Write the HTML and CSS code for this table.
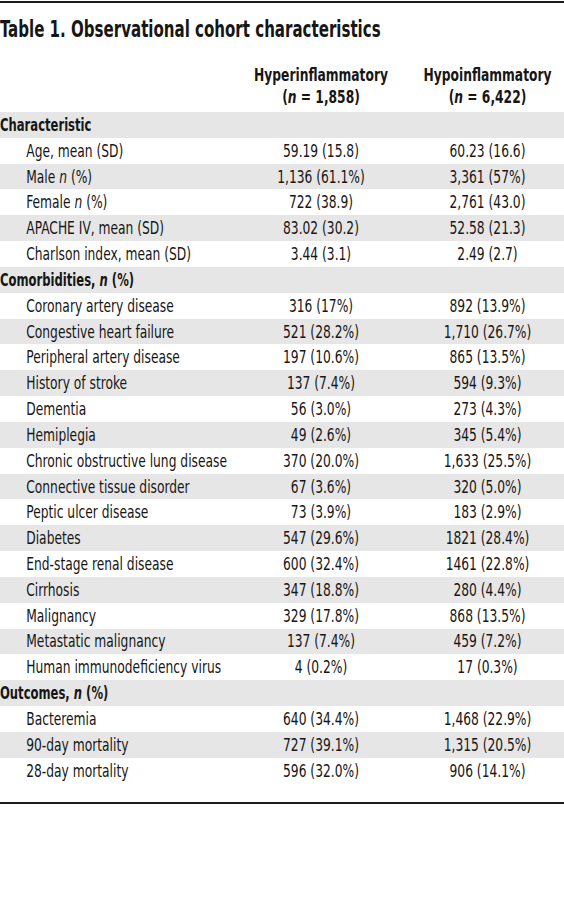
FILE: index.html
```html
<!DOCTYPE html>
<html lang="en">
<head>
  <meta charset="UTF-8">
  <title>Table 1</title>
  <link rel="stylesheet" href="styles.css">
</head>
<body>
  <div class="table-wrap">
    <div class="sheet">
      <h1 class="table-title">Table 1. Observational cohort characteristics</h1>

      <table class="cohort">
        <colgroup>
          <col class="col-label">
          <col class="col-hyper">
          <col class="col-hypo">
        </colgroup>
        <thead>
          <tr>
            <th></th>
            <th>Hyperinflammatory<br>(<i>n</i> = 1,858)</th>
            <th>Hypoinflammatory<br>(<i>n</i> = 6,422)</th>
          </tr>
        </thead>
        <tbody>
          <!-- Characteristic -->
          <tr class="section"><td>Characteristic</td><td></td><td></td></tr>
          <tr><td>Age, mean (SD)</td><td>59.19 (15.8)</td><td>60.23 (16.6)</td></tr>
          <tr><td>Male <i>n</i> (%)</td><td>1,136 (61.1%)</td><td>3,361 (57%)</td></tr>
          <tr><td>Female <i>n</i> (%)</td><td>722 (38.9)</td><td>2,761 (43.0)</td></tr>
          <tr><td>APACHE IV, mean (SD)</td><td>83.02 (30.2)</td><td>52.58 (21.3)</td></tr>
          <tr><td>Charlson index, mean (SD)</td><td>3.44 (3.1)</td><td>2.49 (2.7)</td></tr>

          <!-- Comorbidities -->
          <tr class="section"><td>Comorbidities, <i>n</i> (%)</td><td></td><td></td></tr>
          <tr><td>Coronary artery disease</td><td>316 (17%)</td><td>892 (13.9%)</td></tr>
          <tr><td>Congestive heart failure</td><td>521 (28.2%)</td><td>1,710 (26.7%)</td></tr>
          <tr><td>Peripheral artery disease</td><td>197 (10.6%)</td><td>865 (13.5%)</td></tr>
          <tr><td>History of stroke</td><td>137 (7.4%)</td><td>594 (9.3%)</td></tr>
          <tr><td>Dementia</td><td>56 (3.0%)</td><td>273 (4.3%)</td></tr>
          <tr><td>Hemiplegia</td><td>49 (2.6%)</td><td>345 (5.4%)</td></tr>
          <tr><td>Chronic obstructive lung disease</td><td>370 (20.0%)</td><td>1,633 (25.5%)</td></tr>
          <tr><td>Connective tissue disorder</td><td>67 (3.6%)</td><td>320 (5.0%)</td></tr>
          <tr><td>Peptic ulcer disease</td><td>73 (3.9%)</td><td>183 (2.9%)</td></tr>
          <tr><td>Diabetes</td><td>547 (29.6%)</td><td>1821 (28.4%)</td></tr>
          <tr><td>End-stage renal disease</td><td>600 (32.4%)</td><td>1461 (22.8%)</td></tr>
          <tr><td>Cirrhosis</td><td>347 (18.8%)</td><td>280 (4.4%)</td></tr>
          <tr><td>Malignancy</td><td>329 (17.8%)</td><td>868 (13.5%)</td></tr>
          <tr><td>Metastatic malignancy</td><td>137 (7.4%)</td><td>459 (7.2%)</td></tr>
          <tr><td>Human immunodeficiency virus</td><td>4 (0.2%)</td><td>17 (0.3%)</td></tr>

          <!-- Outcomes -->
          <tr class="section"><td>Outcomes, <i>n</i> (%)</td><td></td><td></td></tr>
          <tr><td>Bacteremia</td><td>640 (34.4%)</td><td>1,468 (22.9%)</td></tr>
          <tr><td>90-day mortality</td><td>727 (39.1%)</td><td>1,315 (20.5%)</td></tr>
          <tr><td>28-day mortality</td><td>596 (32.0%)</td><td>906 (14.1%)</td></tr>
        </tbody>
      </table>
    </div>
  </div>
</body>
</html>
```

FILE: styles.css
```css
*, *:before,
*:after {
  box-sizing: border-box;
}

html {
  background: #ffffff;
}

body {
  margin: 0;
  color: #161616;
  font: 400 18.2px 'DejaVu Sans Condensed', 'Liberation Sans Narrow', 'Liberation Sans', sans-serif;
}

.table-wrap {
  width: 100%;
  margin-top: 1px;
  overflow: hidden;
  border-top: 2px solid #1c1c1c;
  border-bottom: 2px solid #1c1c1c;
  padding-bottom: 18px;
}

/* the journal face is a narrow one: squeeze the condensed sans to its width */
.sheet {
  width: 752px;
  transform: scaleX(0.75);
  transform-origin: 0 0;
}

.table-title {
  margin: 0;
  padding: 13px 0 0;
  font-size: 22.3px;
  line-height: 26px;
  font-weight: 700;
}

.cohort {
  width: 100%;
  border-collapse: collapse;
  table-layout: fixed;
}

.col-label {
  width: 308px;
}

.col-hyper {
  width: 240px;
}

.cohort th {
  padding: 22px 0 4px;
  font-size: 18.2px;
  line-height: 22px;
  font-weight: 700;
  text-align: center;
}

.cohort td {
  height: 25.84px;
  padding: 0;
  line-height: 20px;
  text-align: center;
  white-space: nowrap;
}

.cohort td:first-child {
  padding-left: 35px;
  text-align: left;
}

.cohort tbody tr:nth-child(odd) {
  background: #e6e6e6;
}

.cohort .section td:first-child {
  padding-left: 0;
  font-size: 17.2px;
  font-weight: 700;
}
```
